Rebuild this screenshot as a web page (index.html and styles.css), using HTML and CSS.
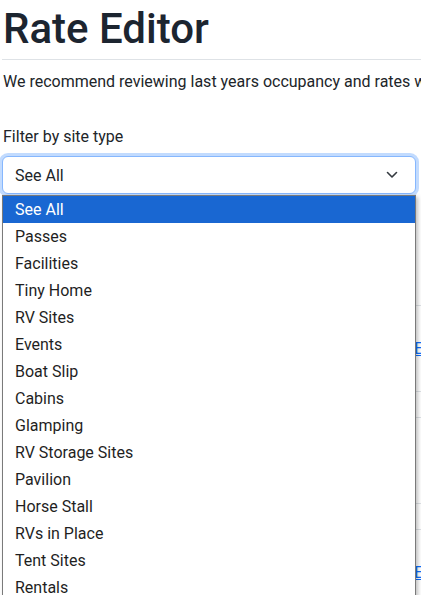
FILE: index.html
```html
<!DOCTYPE html>
<html lang="en">
<head>
<meta charset="utf-8">
<title>Rate Editor</title>
<link rel="stylesheet" href="styles.css">
</head>
<body>
<div class="page">
  <h1 class="title">Rate Editor</h1>
  <hr class="rule">
  <p class="intro">We recommend reviewing last years occupancy and rates when setting new rates for the season.</p>
  <label class="label">Filter by site type</label>
  <div class="select-wrap">
    <div class="select">
      <span>See All</span>
      <svg class="chev" width="12" height="8" viewBox="0 0 12 8"><path d="M1.5 1.5 L6 6 L10.5 1.5" fill="none" stroke="#343a40" stroke-width="1.6" stroke-linecap="round" stroke-linejoin="round"/></svg>
    </div>
    <ul class="menu">
      <li class="opt active">See All</li>
      <li class="opt">Passes</li>
      <li class="opt">Facilities</li>
      <li class="opt">Tiny Home</li>
      <li class="opt">RV Sites</li>
      <li class="opt">Events</li>
      <li class="opt">Boat Slip</li>
      <li class="opt">Cabins</li>
      <li class="opt">Glamping</li>
      <li class="opt">RV Storage Sites</li>
      <li class="opt">Pavilion</li>
      <li class="opt">Horse Stall</li>
      <li class="opt">RVs in Place</li>
      <li class="opt">Tent Sites</li>
      <li class="opt">Rentals</li>
    </ul>
  </div>
  <div class="table">
    <div class="row gap1"></div>
    <div class="row tall"><a class="link" href="#">Edit rates</a></div>
    <div class="row short"></div>
    <div class="row tall"></div>
    <div class="row short"></div>
    <div class="row tall"><a class="link" href="#">Edit rates</a></div>
  </div>
</div>
</body>
</html>
```

FILE: styles.css
```css
html, body {
  margin: 0;
  padding: 0;
  background: #ffffff;
  overflow: hidden;
}
body {
  font-family: Roboto, "Liberation Sans", sans-serif;
  color: #212529;
  width: 421px;
  height: 595px;
}
.page {
  padding: 0 0 0 2px;
}
.title {
  margin: 0;
  padding: 4px 0 0 1px;
  font-size: 42px;
  font-weight: 500;
  line-height: 50px;
  color: #1c2530;
}
.rule {
  margin: 5px 0 0 0;
  border: 0;
  border-top: 1px solid #dee2e6;
  height: 0;
}
.intro {
  margin: 10px 0 0 1px;
  font-size: 16px;
  line-height: 24px;
  white-space: nowrap;
}
.label {
  display: block;
  margin: 31px 0 0 1px;
  font-size: 16px;
  line-height: 24px;
}
.select-wrap {
  position: relative;
  margin-top: 7px;
  width: 414px;
}
.select {
  box-sizing: border-box;
  height: 38px;
  border: 1px solid #86b7fe;
  border-radius: 6px;
  box-shadow: 0 0 0 3px rgba(13, 110, 253, 0.25);
  display: flex;
  align-items: center;
  justify-content: space-between;
  padding: 0 17px 0 12px;
  font-size: 16px;
  background: #fff;
}
.chev {
  display: block;
}
.menu {
  position: absolute;
  z-index: 5;
  top: 39px;
  left: 0;
  width: 414px;
  box-sizing: border-box;
  margin: 0;
  padding: 0;
  list-style: none;
  background: #fff;
  border: 1px solid #7a7a7a;
  box-shadow: 2px 2px 4px rgba(0, 0, 0, 0.25);
}
.opt {
  height: 27px;
  line-height: 27px;
  padding-left: 12px;
  font-size: 16px;
  color: #1f1f1f;
}
.opt.active {
  background: #1967d2;
  color: #ffffff;
}
.row {
  border-top: 1px solid #dee2e6;
  box-sizing: border-box;
  display: flex;
  align-items: center;
  justify-content: flex-end;
}
.gap1 {
  border-top: 0;
  height: 111px;
}
.tall {
  height: 86px;
}
.short {
  height: 26px;
}
.link {
  color: #0d6efd;
  font-size: 16px;
  white-space: nowrap;
  margin-right: -60px;
}
```
